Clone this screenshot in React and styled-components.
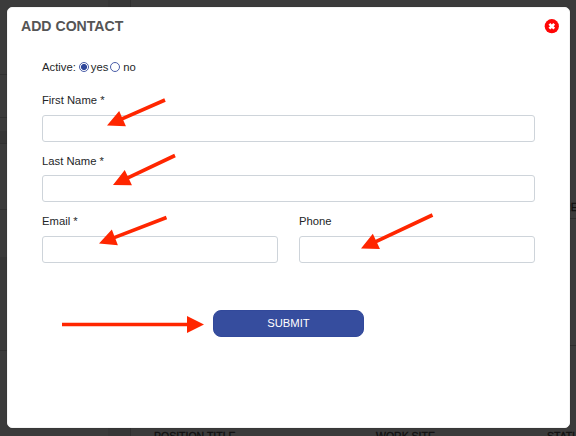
import React from "react";
import styled, { createGlobalStyle } from "styled-components";

const Global = createGlobalStyle`
  * { box-sizing: border-box; }
  body { margin: 0; background: #3b3b3b; font-family: "Liberation Sans", Arial, sans-serif; }
`;

const Screen = styled.div`
  position: relative;
  width: 576px;
  height: 436px;
  overflow: hidden;
  background: #3b3b3b;
`;

const Backdrop = styled.div`
  display: grid;
  grid-template-columns: 108px 23px minmax(0, 1fr);
  height: 100%;
`;

const Rail = styled.div`
  display: flex;
  flex-direction: column;
`;

const RailRow = styled.div`
  height: ${(p) => p.$h}px;
  background: ${(p) => (p.$shade ? "#363636" : "transparent")};
  border-bottom: ${(p) => (p.$line ? "1px solid #313131" : "0")};
`;

const Gutter = styled.div`
  background: #373737;
  border-right: 1px solid #303030;
`;

const Content = styled.div`
  display: flex;
  flex-direction: column;
`;

const EdgeBand = styled.div`
  height: ${(p) => p.$h}px;
  display: flex;
  justify-content: flex-end;
  align-items: flex-end;
  border-bottom: 1px solid #2d2d2d;
`;

const EdgeText = styled.span`
  width: 14px;
  padding: 0 0 5px 1px;
  font-size: 10.6px;
  line-height: 12px;
  color: #101010;
  -webkit-text-stroke: 0.3px #101010;
  white-space: nowrap;
`;

const TableHead = styled.div`
  display: grid;
  grid-template-columns: 222px 171px 1fr;
  height: 6px;
  margin-top: auto;
  padding-left: 23px;
  font-size: 10.5px;
  line-height: 12px;
  color: #101010;
  -webkit-text-stroke: 0.3px #101010;
  white-space: nowrap;
`;

const Modal = styled.section`
  position: absolute;
  left: 7px;
  top: 7px;
  width: 563px;
  height: 421px;
  border-radius: 5px;
  background: #fff;
  border: 1px solid #f4f4f4;
  box-shadow: 0 0 1px #222;
`;

const Header = styled.header`
  display: flex;
  justify-content: space-between;
  padding: 10px 10px 0 13px;
  height: 50px;
`;

const Title = styled.h1`
  margin: 0;
  font-size: 14.1px;
  line-height: 16px;
  font-weight: bold;
  color: #555;
`;

const CloseButton = styled.button`
  width: 15px;
  height: 15px;
  margin-top: 1px;
  padding: 0;
  border: 0;
  background: none;
  svg { display: block; }
`;

const Form = styled.form`
  padding: 0 34px;
  font-size: 11.25px;
  line-height: 14px;
  color: #242628;
`;

const RadioRow = styled.div`
  display: flex;
  align-items: center;
  height: 18px;
`;

const Radio = styled.span`
  width: 10px;
  height: 10px;
  margin: 0 ${(p) => p.$right}px 0 ${(p) => p.$left}px;
  border-radius: 50%;
  border: 1px solid #4a5da8;
  background: ${(p) =>
    p.$checked ? "radial-gradient(circle, #2f479a 2.7px, #fff 3.4px)" : "#fff"};
`;

const Fields = styled.div`
  display: grid;
  grid-template-columns: 1fr 1fr;
  column-gap: 21px;
  row-gap: 11.9px;
  margin-top: 17.3px;
`;

const Field = styled.label`
  display: flex;
  flex-direction: column;
  gap: 7.6px;
  grid-column: ${(p) => (p.$wide ? "1 / -1" : "auto")};
`;

const Input = styled.input`
  width: 100%;
  height: 27px;
  border: 1px solid #ced4da;
  border-radius: 3px;
  background: #fff;
`;

const Submit = styled.button`
  display: block;
  width: 151px;
  height: 27px;
  margin: 47px auto 0 171px;
  padding: 0;
  border: 1px solid #32499b;
  border-radius: 8px;
  background: #364d9e;
  color: #fff;
  font: 11.25px/23px "Liberation Sans", Arial, sans-serif;
`;

const Annotations = styled.svg`
  position: absolute;
  inset: 0;
  pointer-events: none;
`;

const rail = [
  { h: 75, line: true },
  { h: 43, line: true },
  { h: 13 },
  { h: 13, shade: true, line: true },
  { h: 66, line: true },
  { h: 47 },
  { h: 13, shade: true },
  { h: 81, line: true },
];

// Each arrow runs from its tail to the tip of its head.
const arrows = [
  [165, 100, 107, 125.5],
  [175, 155.5, 113, 185],
  [166.5, 217.5, 99, 243.5],
  [432.5, 215, 361, 248.5],
  [62, 324.5, 204, 324.5],
];

function Arrow({ points: [x1, y1, x2, y2] }) {
  const length = Math.hypot(x2 - x1, y2 - y1);
  const angle = (Math.atan2(y2 - y1, x2 - x1) * 180) / Math.PI;
  return (
    <g transform={`translate(${x2} ${y2}) rotate(${angle})`} fill="#ff2600">
      <path d={`M${-length} -1.8H-17V-8.4L0 0L-17 8.4V1.8H${-length}Z`} />
    </g>
  );
}

export default function App() {
  return (
    <>
      <Global />
      <Screen>
        <Backdrop>
          <Rail>
            {rail.map((r, i) => (
              <RailRow key={i} $h={r.h} $shade={r.shade} $line={r.line} />
            ))}
          </Rail>
          <Gutter />
          <Content>
            <EdgeBand $h={219}><EdgeText>RE</EdgeText></EdgeBand>
            <EdgeBand $h={127} />
            <TableHead>
              <span>POSITION TITLE</span>
              <span>WORK SITE</span>
              <span>STATUS</span>
            </TableHead>
          </Content>
        </Backdrop>
        <Modal>
          <Header>
            <Title>ADD CONTACT</Title>
            <CloseButton type="button" aria-label="Close">
              <svg width="15" height="15" viewBox="0 0 15 15">
                <circle cx="7.8" cy="7.2" r="7.1" fill="#ff0505" />
                <path d="M5.4 4.8L10.2 9.6M10.2 4.8L5.4 9.6" stroke="#fff" strokeWidth="2.6" />
              </svg>
            </CloseButton>
          </Header>
          <Form>
            <RadioRow>
              Active:
              <Radio $checked $left={3} $right={2} />yes
              <Radio $left={2} $right={3} />no
            </RadioRow>
            <Fields>
              <Field $wide>First Name *<Input /></Field>
              <Field $wide>Last Name *<Input /></Field>
              <Field>Email *<Input /></Field>
              <Field>Phone<Input /></Field>
            </Fields>
            <Submit type="button">SUBMIT</Submit>
          </Form>
        </Modal>
        <Annotations width="576" height="436">
          {arrows.map((points) => <Arrow key={points.join()} points={points} />)}
        </Annotations>
      </Screen>
    </>
  );
}
